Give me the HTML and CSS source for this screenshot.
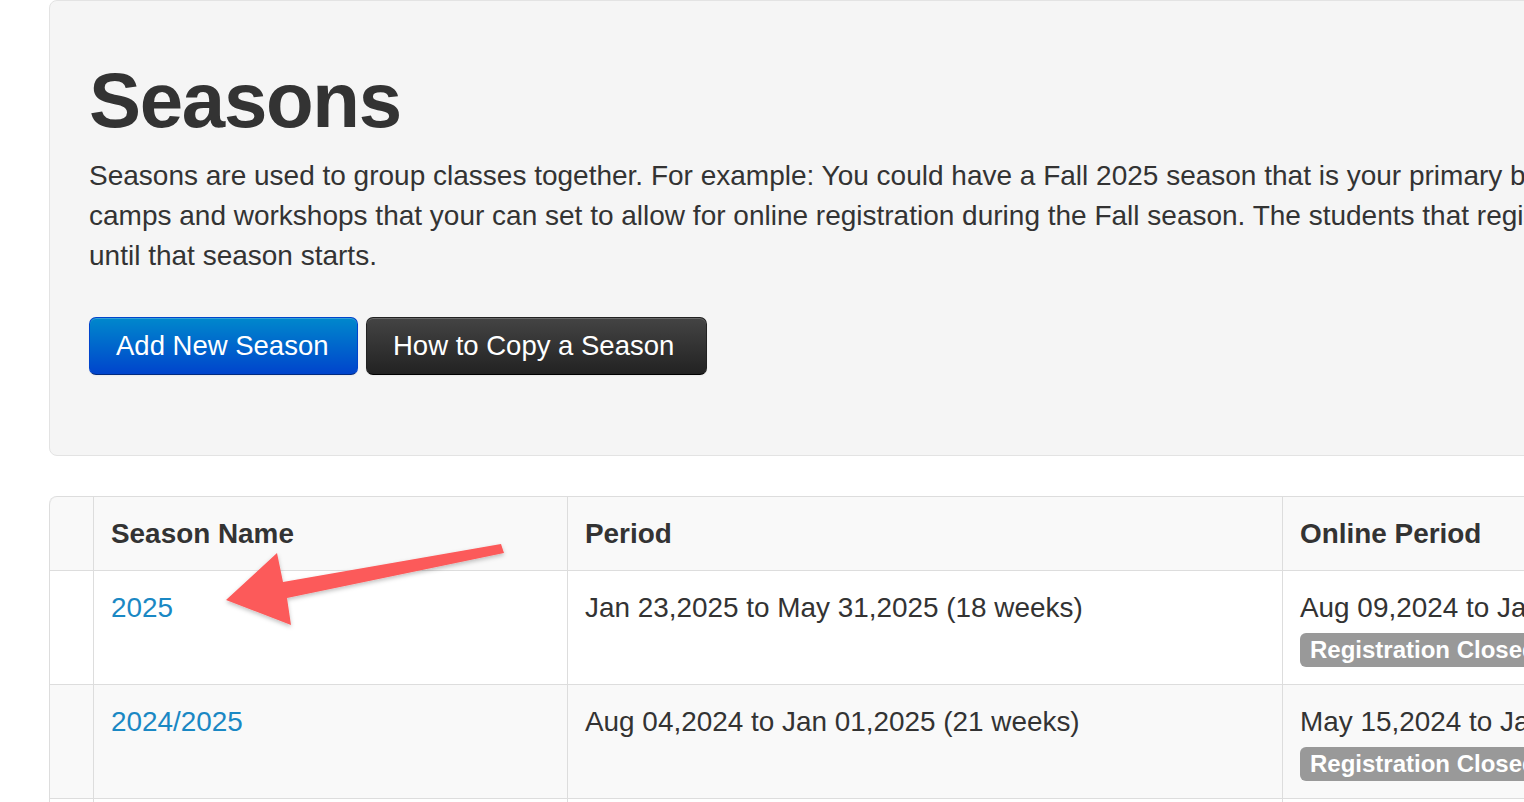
FILE: index.html
```html
<!DOCTYPE html>
<html>
<head>
<meta charset="utf-8">
<title>Seasons</title>
<link rel="stylesheet" href="styles.css">
</head>
<body>
<div class="page">
  <div class="hero">
    <h1 class="hero-title">Seasons</h1>
    <p class="hero-text">Seasons are used to group classes together. For example: You could have a Fall 2025 season that is your primary business season and a Summer season with<br>camps and workshops that your can set to allow for online registration during the Fall season. The students that register will not show in classes<br>until that season starts.</p>
    <div class="hero-actions">
      <a class="btn btn-primary" href="#">Add New Season</a>
      <a class="btn btn-inverse" href="#">How to Copy a Season</a>
    </div>
  </div>

  <table class="seasons">
    <thead>
      <tr>
        <th class="col-check"></th>
        <th class="col-name">Season Name</th>
        <th class="col-period">Period</th>
        <th class="col-online">Online Period</th>
      </tr>
    </thead>
    <tbody>
      <tr class="row-white">
        <td></td>
        <td><a class="season-link" href="#">2025</a></td>
        <td>Jan 23,2025 to May 31,2025 (18 weeks)</td>
        <td>
          <div>Aug 09,2024 to Jan 23,2025</div>
          <div class="badge-row"><span class="badge">Registration Closed</span></div>
        </td>
      </tr>
      <tr class="row-grey">
        <td></td>
        <td><a class="season-link" href="#">2024/2025</a></td>
        <td>Aug 04,2024 to Jan 01,2025 (21 weeks)</td>
        <td>
          <div>May 15,2024 to Jan 01,2025</div>
          <div class="badge-row"><span class="badge">Registration Closed</span></div>
        </td>
      </tr>
      <tr class="row-white">
        <td></td>
        <td>&nbsp;</td>
        <td>&nbsp;</td>
        <td>&nbsp;</td>
      </tr>
    </tbody>
  </table>

  <svg class="arrow" width="320" height="110" viewBox="0 0 320 110" aria-hidden="true">
    <defs>
      <filter id="sh" x="-10%" y="-20%" width="120%" height="140%">
        <feDropShadow dx="0" dy="2" stdDeviation="2" flood-color="#000" flood-opacity="0.25"/>
      </filter>
    </defs>
    <polygon filter="url(#sh)" fill="#fc5a5a"
      points="301,14 304,23 87,68 91,95 26,70 77,23 83,52"/>
  </svg>
</div>
</body>
</html>
```

FILE: styles.css
```css
html, body {
  margin: 0;
  padding: 0;
  background: #ffffff;
  overflow: hidden;
}

body {
  width: 1524px;
  height: 802px;
  font-family: "Liberation Sans", Arial, Helvetica, sans-serif;
  color: #333333;
}

.page {
  position: relative;
  width: 1900px;
  padding-left: 49px;
}

.hero {
  background: #f5f5f5;
  border: 1px solid #e3e3e3;
  border-radius: 8px;
  padding: 60px 40px 0 39px;
  height: 394px;
  box-sizing: content-box;
}

.hero-title {
  margin: 0;
  font-size: 78px;
  line-height: 78px;
  font-weight: bold;
  letter-spacing: -1.3px;
  color: #333333;
}

.hero-text {
  margin: 17px 0 0 0;
  font-size: 28px;
  line-height: 40px;
  font-weight: normal;
  white-space: nowrap;
  color: #333333;
}

.hero-actions {
  display: flex;
  gap: 8px;
  margin-top: 41px;
}

.btn {
  display: inline-block;
  box-sizing: border-box;
  height: 58px;
  line-height: 56px;
  padding: 0 26px;
  font-size: 27.5px;
  color: #ffffff;
  text-decoration: none;
  border-radius: 7px;
  border: 1px solid;
  box-shadow: inset 0 1px 0 rgba(255,255,255,0.2), 0 1px 2px rgba(0,0,0,0.05);
}

.btn-primary {
  width: 269px;
  background: linear-gradient(#0088cc, #0044cc);
  border-color: #0044cc #0044cc #002a80;
}

.btn-inverse {
  width: 341px;
  background: linear-gradient(#444444, #222222);
  border-color: #222222 #222222 #000000;
}

.seasons {
  margin-top: 40px;
  border-collapse: separate;
  border-spacing: 0;
  border: 1px solid #dddddd;
  border-left: 0;
  border-radius: 8px;
  table-layout: fixed;
  width: 1800px;
  font-size: 27.9px;
  line-height: 40px;
}

.seasons th,
.seasons td {
  border-left: 1px solid #dddddd;
  border-top: 1px solid #dddddd;
  padding: 17px 17px 16px 17px;
  text-align: left;
  vertical-align: top;
  white-space: nowrap;
  overflow: hidden;
}

.seasons thead th {
  border-top: 0;
  font-weight: bold;
  background: #f9f9f9;
}

.seasons thead th:first-child {
  border-top-left-radius: 8px;
}

.seasons tbody td {
  padding-bottom: 18px;
}

.col-check { width: 9px; }
.col-name { width: 439px; }
.col-period { width: 680px; }
.col-online { width: auto; }

.row-white td { background: #ffffff; }
.row-grey td { background: #f9f9f9; }

.season-link {
  color: #1a88c4;
  text-decoration: none;
}

.badge-row {
  margin-top: 4px;
  height: 34px;
  line-height: 34px;
}

.badge {
  display: inline-block;
  height: 34px;
  line-height: 34px;
  padding: 0 10px;
  background: #999999;
  color: #ffffff;
  font-weight: bold;
  font-size: 24px;
  border-radius: 6px;
}

.arrow {
  position: absolute;
  left: 200px;
  top: 530px;
  overflow: visible;
}
```
